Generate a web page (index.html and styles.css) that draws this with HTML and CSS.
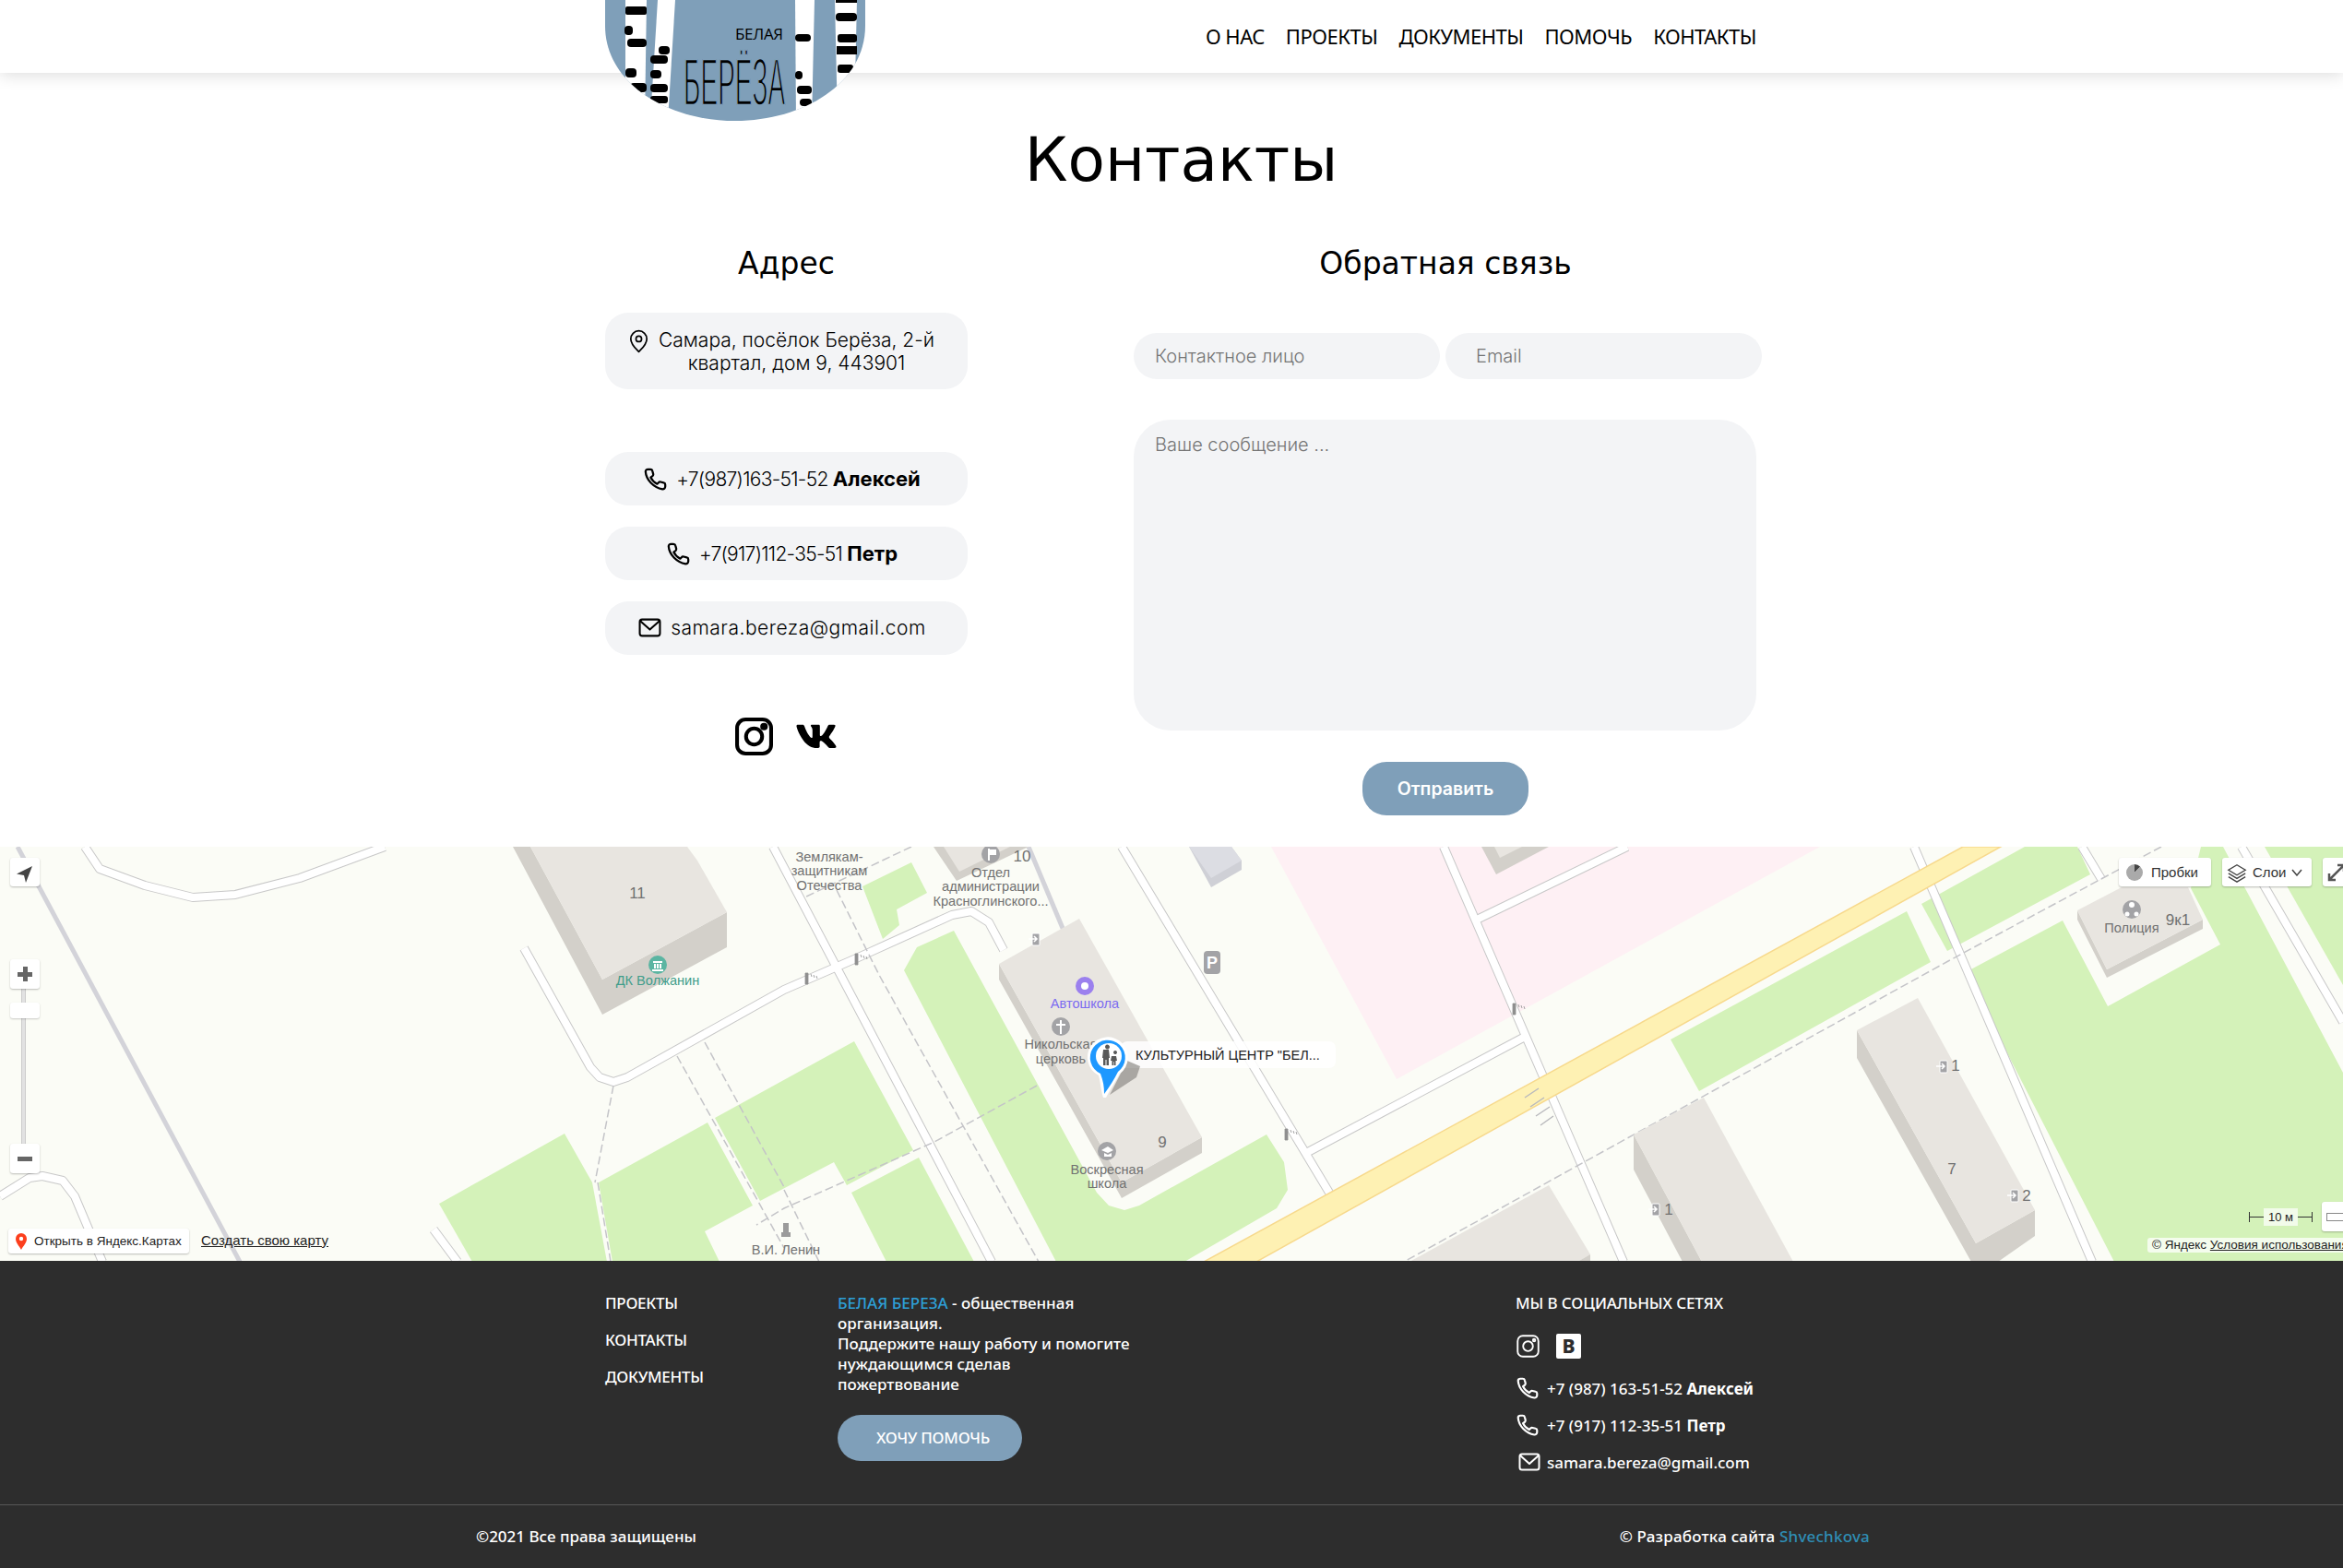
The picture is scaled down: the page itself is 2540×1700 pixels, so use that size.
FILE: index.html
```html
<!DOCTYPE html>
<html lang="ru">
<head>
  <meta charset="utf-8">
  <title>Контакты</title>
  <link rel="stylesheet" href="styles.css">
</head>
<body>

  <!-- shared icons -->
  <svg class="icon-defs" width="0" height="0">
    <symbol id="i-phone" viewBox="0 0 24 24"><path d="M2.500 4.600c0-1.200 1-2.100 2.200-2.100h2.500c.9 0 1.700.6 1.900 1.500l.8 3c.2.800-.1 1.500-.7 2L7.400 10.300c1.300 2.800 3.400 4.900 6.300 6.300l1.300-1.300c.5-.6 1.300-.8 2-.6l3 .8c.9.200 1.500 1 1.500 1.900v1.800c0 1.500-1.200 2.600-2.700 2.500C10.300 20 3 12.800 2.500 4.600z"/></symbol>
    <symbol id="i-mail" viewBox="0 0 24 24"><rect x="1.500" y="3.500" width="21" height="17" rx="2.500"/><path d="M2 5l10 9 10-9"/></symbol>
    <symbol id="i-place" viewBox="0 0 24 30"><path d="M12 28C8 24 2 19 2 12a10 10 0 0 1 20 0c0 7-6 12-10 16z"/><circle cx="12" cy="12" r="3.500"/></symbol>
    <symbol id="i-insta" viewBox="0 0 40 40"><rect x="2" y="2" width="36" height="36" rx="9"/><circle cx="20" cy="20" r="8.500"/><circle class="dot" cx="30.500" cy="9.500" r="2"/></symbol>
    <symbol id="i-vk" viewBox="0 0 576 512"><path d="M545 117.700c3.700-12.500 0-21.700-17.800-21.700h-58.900c-15 0-21.900 7.900-25.600 18.700 0 0-29.300 72.100-70.800 118.800-13.400 13.400-19.500 17.700-26.800 17.700-3.700 0-9.200-4.300-9.200-16.800V117.700c0-15-4.200-21.700-16.600-21.700h-92.600c-9.400 0-15 7-15 13.500 0 14.200 21.200 17.500 23.400 57.500v86.800c0 19-3.400 22.500-10.900 22.500-20 0-68.600-73.400-97.400-157.400-5.800-16.300-11.500-22.900-26.600-22.900H38.800c-16.800 0-20.200 7.900-20.200 16.700 0 15.600 20 93.100 93 195.500C160.300 375.600 229 413 291.400 413c37.400 0 42-8.400 42-22.900 0-66.800-3.400-73.100 15.400-73.100 8.700 0 23.700 4.400 58.700 38.100 40 40 46.600 58 69 58h58.900c16.800 0 25.300-8.400 20.400-25-11.200-34.900-86.900-106.700-90.300-111.500-8.700-11.200-6.200-16.200 0-26.200.1-.1 72-101.300 79.400-135.600z"/></symbol>
  </svg>

  <header class="site-header">
    <svg class="logo" viewBox="0 0 282 131" width="282" height="131">
      <defs><clipPath id="logo-clip"><path d="M0 0H282V28C282 90 215 131 141 131S0 90 0 28Z"/></clipPath></defs>
      <g clip-path="url(#logo-clip)">
        <rect class="logo-bg" width="282" height="131"/>
        <path class="logo-band" d="M22 0H45L43 131H22Z"/>
        <path class="logo-band" d="M57 0H76L68 131H49Z"/>
        <path class="logo-band" d="M206 0H227L224 131H207Z"/>
        <path class="logo-band" d="M249 0H273L270 131H252Z"/>
        <g class="logo-dash">
          <rect x="22" y="7" width="23" height="9" rx="2"/>
          <rect x="21" y="28" width="9" height="10" rx="4"/>
          <rect x="24" y="42" width="21" height="9" rx="4"/>
          <rect x="22" y="74" width="12" height="10" rx="4"/>
          <rect x="27" y="90" width="18" height="10" rx="4"/>
          <rect x="58" y="50" width="12" height="9" rx="4"/>
          <rect x="49" y="60" width="19" height="9" rx="4"/>
          <rect x="49" y="76" width="12" height="9" rx="4"/>
          <rect x="49" y="91" width="19" height="9" rx="4"/>
          <rect x="49" y="104" width="19" height="8" rx="3"/>
          <rect x="206" y="37" width="17" height="8" rx="4"/>
          <rect x="206" y="77" width="8" height="9" rx="4"/>
          <rect x="208" y="93" width="16" height="9" rx="4"/>
          <rect x="211" y="107" width="13" height="8" rx="4"/>
          <rect x="250" y="0" width="23" height="3"/>
          <rect x="250" y="14" width="23" height="9" rx="4"/>
          <rect x="252" y="37" width="21" height="9" rx="3"/>
          <rect x="251" y="50" width="22" height="9"/>
          <rect x="252" y="70" width="17" height="9" rx="3"/>
        </g>
        <text class="logo-small" x="141" y="43">БЕЛАЯ</text>
        <text class="logo-big" transform="translate(85 114) scale(.39 1)">БЕРЁЗА</text>
      </g>
    </svg>
    <nav class="main-nav">
      <a href="#">О НАС</a>
      <a href="#">ПРОЕКТЫ</a>
      <a href="#">ДОКУМЕНТЫ</a>
      <a href="#">ПОМОЧЬ</a>
      <a href="#">КОНТАКТЫ</a>
    </nav>
  </header>

  <main class="contacts">
    <h1>Контакты</h1>
    <div class="contacts-row">
      <section class="address-col">
        <h2>Адрес</h2>
        <div class="info-box address-box">
          <svg class="icon-line place-icon"><use href="#i-place"/></svg>
          <span>Самара, посёлок Берёза, 2-й<br>квартал, дом 9, 443901</span>
        </div>
        <div class="info-list">
          <a class="info-box phone-box" href="#"><svg class="icon-line phone-icon"><use href="#i-phone"/></svg>+7(987)163-51-52 <b>Алексей</b></a>
          <a class="info-box phone-box" href="#"><svg class="icon-line phone-icon"><use href="#i-phone"/></svg>+7(917)112-35-51 <b>Петр</b></a>
          <a class="info-box email-box" href="#"><svg class="icon-line mail-icon"><use href="#i-mail"/></svg>samara.bereza@gmail.com</a>
        </div>
        <div class="social">
          <svg class="icon-line insta-big"><use href="#i-insta"/></svg>
          <svg class="vk-big"><use href="#i-vk"/></svg>
        </div>
      </section>

      <section class="feedback-col">
        <h2>Обратная связь</h2>
        <form class="feedback-form">
          <div class="form-row">
            <input class="field name-field" type="text" placeholder="Контактное лицо">
            <input class="field email-field" type="text" placeholder="Email">
          </div>
          <textarea class="field message-field" placeholder="Ваше сообщение ..."></textarea>
          <button class="send-btn" type="button">Отправить</button>
        </form>
      </section>
    </div>
  </main>

  <section class="map">
    <svg class="map-canvas" viewBox="0 0 2540 450" width="2540" height="450">
      <defs>
        <path id="roads" d="M92 0L108 24L157 42L209 55L255 52L325 34L417 0
          M0 379L32 359L46 357L68 362L81 379L111 450
          M568 110L640 239L650 250L665 255L680 250L850 155L926 122L1032 74L1053 70L1072 82L1088 112
          M470 415L496 450
          M838 0L1075 450
          M1216 0L1441 375
          M1565 0L1760 450
          M1764 0L1603 78
          M1416 332L1655 205
          M2075 0L2268 450
          M2257 0L2278 35
          M2430 0L2540 190"/>
      </defs>

      <path class="m-pink" d="M1378 0L1514 252L1700 150L1973 0Z"/>

      <g class="m-green">
        <path d="M612 311L476 387L512 450H658L642 364Z"/>
        <path d="M767 299L649 364L664 450H780L764 417L816 389Z"/>
        <path d="M775 294L926 211L990 329L918 367L904 342L824 384Z"/>
        <path d="M996 337L923 375L961 450H1056Z"/>
        <path d="M1034 91L994 109L980 134L1145 450H1284L1384 392L1396 372L1392 342L1373 312L1235 389L1219 394L1202 389L1189 375Z"/>
        <path d="M2252 0L2266 30L2111 113L2083 62L2195 0Z"/>
        <path d="M2067 70L2093 125L1842 265L1811 209Z"/>
        <path d="M2131 136L2236 80L2285 173L2407 106L2375 45L2386 0H2410L2540 245V450H2292Z"/>
        <path d="M2455 0H2540V150Z"/>
        <path d="M935 43L988 17L1005 50L972 68L975 85L957 100Z"/>
      </g>

      <path class="m-rail" d="M19 0L260 450"/>
      <path class="m-rail" d="M1115 0L1159 105"/>

      <use class="m-road-edge" href="#roads"/>
      <use class="m-road" href="#roads"/>

      <path class="m-main" d="M1305 450L2128 0H2169L1362 450Z"/>

      <g class="m-dash">
        <path d="M907 47L953 139L1126 450"/>
        <path d="M1124 259L1013 320L850 392L820 410"/>
        <path d="M850 372L888 450"/>
        <path d="M665 259L645 364"/>
        <path d="M648 364L662 450"/>
        <path d="M734 227L850 435"/>
        <path d="M764 212L850 369"/>
        <path d="M988 0L872 55"/>
        <path d="M2343 0L2112 124L1708 347L1522 450"/>
      </g>

      <g class="m-cross">
        <path d="M1653 272L1668 262M1659 282L1674 272M1665 292L1680 282M1670 302L1684 292"/>
      </g>

      <!-- buildings -->
      <path class="m-wall" d="M556 0L653 182L788 109V71L653 144L575 0Z"/>
      <path class="m-roof" d="M575 0H745L756 15L788 71L653 144Z"/>
      <path class="m-wall" d="M1012 0L1037 37L1115 0Z"/>
      <path class="m-roof" d="M1023 0L1040 27L1095 0Z"/>
      <path class="m-wall-blue" d="M1289 0L1313 44L1346 25V15L1335 0Z"/>
      <path class="m-roof-blue" d="M1289 0L1313 34L1346 15L1335 0Z"/>
      <path class="m-wall" d="M1606 0L1622 30L1679 0Z"/>
      <path class="m-roof" d="M1620 0L1626 12L1650 0Z"/>
      <path class="m-wall" d="M1083 127V144L1216 381L1303 332V315L1216 364Z"/>
      <path class="m-roof" d="M1170 78L1303 315L1216 364L1083 127Z"/>
      <path class="m-wall" d="M2013 199V229L2137 450H2166L2206 422V394L2142 430Z"/>
      <path class="m-roof" d="M2079 164L2013 199L2142 430L2206 394Z"/>
      <path class="m-wall" d="M1771 312V350L1824 450H1845Z"/>
      <path class="m-roof" d="M1847 272L1771 312L1845 450H1944Z"/>
      <path class="m-roof" d="M1679 367L1528 450H1710L1724 442Z"/>
      <path class="m-wall" d="M1724 442V450H1710Z"/>
      <path class="m-wall" d="M2252 69V79L2284 142L2388 89V79L2284 133Z"/>
      <path class="m-roof" d="M2252 69L2300 44H2372L2388 79L2284 133Z"/>

      <!-- map icons -->
      <circle class="m-ico-teal" cx="713" cy="128" r="10"/>
      <path class="m-ico-white" d="M708 124H718V126H708ZM709 127H711V132H709ZM712 127H714V132H712ZM715 127H717V132H715ZM707 133H719V135H707Z"/>
      <circle class="m-ico-gray" cx="1074" cy="8" r="10"/>
      <path class="m-ico-white" d="M1071 2H1073V15H1071ZM1073 3H1080V9H1073Z"/>
      <circle class="m-ico-purple" cx="1176" cy="151" r="10"/>
      <circle class="m-ico-white" cx="1176" cy="151" r="4"/>
      <circle class="m-ico-gray" cx="1150" cy="195" r="10"/>
      <path class="m-ico-white" d="M1149 188H1151V203H1149ZM1145 192H1155V194H1145Z"/>
      <circle class="m-ico-gray" cx="1200" cy="330" r="10"/>
      <path class="m-ico-white" d="M1194 329L1201 325L1207 329L1201 332ZM1197 332L1201 334L1205 332V336H1197Z"/>
      <circle class="m-ico-gray" cx="2311" cy="68" r="10"/>
      <circle class="m-ico-white" cx="2311" cy="63" r="3"/>
      <circle class="m-ico-white" cx="2306" cy="73" r="2.500"/>
      <circle class="m-ico-white" cx="2316" cy="73" r="2.500"/>
      <rect class="m-ico-gray" x="1305" y="113" width="18" height="25" rx="4"/>
      <text class="m-park" x="1314" y="132">P</text>
      <path class="m-statue" d="M849 408H855V418H857V423H847V418H849Z"/>

      <g class="m-barrier">
        <path d="M873 137h3v12h-3zM879 138l1 3M882 139l1 3M885 140l1 3"/>
        <path d="M927 116h3v12h-3zM933 117l1 3M936 118l1 3M939 119l1 3"/>
        <path d="M1393 306h3v12h-3zM1399 307l1 3M1402 308l1 3M1405 309l1 3"/>
        <path d="M1640 170h3v12h-3zM1646 171l1 3M1649 172l1 3M1652 173l1 3"/>
      </g>

      <g class="m-door">
        <rect x="1119" y="94" width="8" height="13" rx="1"/>
        <rect x="2103" y="232" width="8" height="13" rx="1"/>
        <rect x="2180" y="372" width="8" height="13" rx="1"/>
        <rect x="1791" y="387" width="8" height="13" rx="1"/>
      </g>
      <path class="m-door-arrow" d="M1115 100H1124M1121 97L1124 100L1121 103M2099 238H2108M2105 235L2108 238L2105 241M2176 378H2185M2182 375L2185 378L2182 381M1787 393H1796M1793 390L1796 393L1793 396"/>

      <!-- map labels -->
      <g class="m-label">
        <text x="691" y="56" class="m-num">11</text>
        <text x="899" y="16">Землякам-</text>
        <text x="899" y="31">защитникам</text>
        <text x="899" y="47">Отечества</text>
        <text x="1108" y="16" class="m-num">10</text>
        <text x="1074" y="33">Отдел</text>
        <text x="1074" y="48">администрации</text>
        <text x="1074" y="64">Красноглинского...</text>
        <text x="1150" y="219">Никольская</text>
        <text x="1150" y="235">церковь</text>
        <text x="1260" y="326" class="m-num">9</text>
        <text x="1200" y="355">Воскресная</text>
        <text x="1200" y="370">школа</text>
        <text x="852" y="442">В.И. Ленин</text>
        <text x="2311" y="93">Полиция</text>
        <text x="2361" y="85" class="m-num">9к1</text>
        <text x="2120" y="243" class="m-num">1</text>
        <text x="2116" y="355" class="m-num">7</text>
        <text x="2197" y="384" class="m-num">2</text>
        <text x="1809" y="399" class="m-num">1</text>
        <text x="713" y="150" class="m-teal">ДК Волжанин</text>
        <text x="1176" y="175" class="m-purple">Автошкола</text>
      </g>

      <!-- placemark -->
      <rect class="m-pin-label" x="1215" y="211" width="233" height="29" rx="7"/>
      <text class="m-pin-text" x="1231" y="231">КУЛЬТУРНЫЙ ЦЕНТР "БЕЛ...</text>
      <path class="m-pin-shadow" d="M1203 269L1222 232L1236 238L1232 250Z"/>
      <path class="m-pin-halo" d="M1196 272C1193 262 1193 255 1191 248A22 22 0 1 1 1214 246C1209 255 1203 264 1199 272Z"/>
      <path class="m-pin-blue" d="M1197 268C1197 260 1196 254 1193 246A19 19 0 1 1 1212 244C1208 252 1203 260 1197 268Z"/>
      <circle class="m-ico-white" cx="1202" cy="227" r="14"/>
      <path class="m-pin-people" d="M1198 217a2.500 2.500 0 1 1 0 .1ZM1196 220H1202L1203 229H1202V237H1199.500V231H1198.500V237H1196V229H1195ZM1207 223a2 2 0 1 1 0 .1ZM1205 227H1210L1211 232H1209.500V237H1207.800V233H1207.200V237H1205.500V232H1204Z"/>
    </svg>

    <button class="map-btn map-locate" type="button"><svg viewBox="0 0 20 20" width="20" height="20"><path d="M18 1L1 9.500L9 11L11 19Z"/></svg></button>
    <div class="map-zoom">
      <button class="map-btn map-zoom-btn" type="button"><span class="zoom-plus"></span></button>
      <div class="map-zoom-track"><span class="map-zoom-handle"></span></div>
      <button class="map-btn map-zoom-btn" type="button"><span class="zoom-minus"></span></button>
    </div>
    <a class="map-open" href="#">
      <svg viewBox="0 0 14 20" width="14" height="20"><path class="open-pin" d="M7 19C5 15 1 11.500 1 7a6 6 0 0 1 12 0c0 4.500-4 8-6 12z"/><circle cx="7" cy="7" r="2.200" fill="#fff"/></svg>Открыть в Яндекс.Картах
    </a>
    <a class="map-create" href="#">Создать свою карту</a>

    <div class="map-top-right">
      <button class="map-btn map-tool map-traffic" type="button"><span class="traffic-dot"></span>Пробки</button>
      <button class="map-btn map-tool map-layers" type="button">
        <svg viewBox="0 0 24 24" width="22" height="22"><path d="M12 3L22 9L12 15L2 9ZM2 13L12 19L22 13M2 17L12 23L22 17"/></svg>Слои
        <svg class="chev" viewBox="0 0 12 8" width="12" height="8"><path d="M1 1L6 7L11 1"/></svg>
      </button>
      <button class="map-btn map-full" type="button"><svg viewBox="0 0 20 20" width="20" height="20"><path d="M2 18L18 2M11 2H18V9M2 11V18H9"/></svg></button>
    </div>

    <div class="map-scale-row">
      <span class="scale-line"></span><span class="scale-text">10 м</span><span class="scale-line"></span>
      <button class="map-btn map-ruler" type="button"><span></span></button>
    </div>
    <div class="map-copy">© Яндекс <a href="#">Условия использования</a></div>
  </section>

  <footer class="site-footer">
    <div class="footer-top">
      <nav class="footer-nav">
        <a href="#">ПРОЕКТЫ</a>
        <a href="#">КОНТАКТЫ</a>
        <a href="#">ДОКУМЕНТЫ</a>
      </nav>
      <div class="footer-about">
        <p><span class="accent">БЕЛАЯ БЕРЕЗА</span> - общественная<br>организация.<br>Поддержите нашу работу и помогите<br>нуждающимся сделав<br>пожертвование</p>
        <a class="help-btn" href="#">ХОЧУ ПОМОЧЬ</a>
      </div>
      <div class="footer-social">
        <div class="footer-heading">МЫ В СОЦИАЛЬНЫХ СЕТЯХ</div>
        <div class="footer-icons">
          <svg class="icon-line footer-insta"><use href="#i-insta"/></svg>
          <span class="footer-vk">В</span>
        </div>
        <a class="footer-contact" href="#"><svg class="icon-line footer-phone"><use href="#i-phone"/></svg>+7 (987) 163-51-52 <b>Алексей</b></a>
        <a class="footer-contact" href="#"><svg class="icon-line footer-phone"><use href="#i-phone"/></svg>+7 (917) 112-35-51 <b>Петр</b></a>
        <a class="footer-contact" href="#"><svg class="icon-line footer-mail"><use href="#i-mail"/></svg>samara.bereza@gmail.com</a>
      </div>
    </div>
    <div class="footer-bottom">
      <span>©2021 Все права защищены</span>
      <span class="footer-dev">© Разработка сайта <a class="accent-dark" href="#">Shvechkova</a></span>
    </div>
  </footer>

</body>
</html>
```
FILE: styles.css
```css
body {
  margin: 0;
  font-family: "Noto Sans", sans-serif;
  color: #000;
  background-color: #fff;
}

a {
  color: inherit;
  text-decoration: none;
}

.icon-defs {
  position: absolute;
}

.icon-line {
  fill: none;
  stroke: currentColor;
  stroke-width: 2;
  stroke-linejoin: round;
  stroke-linecap: round;
}

/* Header */
.site-header {
  position: relative;
  z-index: 2;
  height: 79px;
  box-sizing: border-box;
  padding: 0 636px 2px 0;
  background-color: #fff;
  box-shadow: 0 3px 16px rgba(0, 0, 0, 0.13);
  display: flex;
  justify-content: flex-end;
  align-items: center;
}

.logo {
  position: absolute;
  left: 656px;
  top: 0;
}

.logo-bg {
  fill: #7f9fb9;
}

.logo-band {
  fill: #fff;
}

.logo-dash {
  fill: #000;
}

.logo-small {
  font-family: "Open Sans", sans-serif;
  font-size: 17px;
  letter-spacing: -0.3px;
}

.logo-big {
  font-family: "Liberation Sans", sans-serif;
  font-size: 72px;
  stroke: #7f9fb9;
  stroke-width: 2.400px;
}

.main-nav {
  display: flex;
  gap: 23px;
  font-size: 22px;
  letter-spacing: -0.5px;
}

/* Contacts */
.contacts {
  height: 839px;
  box-sizing: border-box;
  margin-left: 656px;
  width: 1249px;
  font-family: Inter, sans-serif;
}

.contacts h1 {
  margin: 0;
  padding-top: 55px;
  height: 117px;
  box-sizing: border-box;
  font-family: "DejaVu Sans", sans-serif;
  font-size: 66px;
  line-height: 80px;
  font-weight: 400;
  text-align: center;
}

.contacts h2 {
  margin: 0;
  font-family: "DejaVu Sans", sans-serif;
  font-size: 33px;
  line-height: 44px;
  font-weight: 400;
  text-align: center;
}

.contacts-row {
  display: flex;
  gap: 180px;
  padding-top: 68px;
}

.address-col {
  width: 393px;
}

.info-box {
  display: block;
  height: 58px;
  line-height: 58px;
  background-color: #f3f4f6;
  border-radius: 25px;
  text-align: center;
  font-size: 21px;
  font-weight: 300;
  white-space: nowrap;
}

.address-box {
  display: flex;
  justify-content: center;
  align-items: flex-start;
  gap: 11px;
  height: 83px;
  margin-top: 31px;
  padding: 17px 10px 0 0;
  box-sizing: border-box;
  line-height: 25px;
}

.info-list {
  display: flex;
  flex-direction: column;
  gap: 23px;
  margin-top: 68px;
}

.info-list svg {
  vertical-align: middle;
  margin-top: -4px;
}

.phone-box {
  letter-spacing: -0.7px;
  padding-right: 10px;
}

.phone-box b {
  font-size: 22px;
  font-weight: 700;
  letter-spacing: 0;
}

.email-box {
  letter-spacing: 0.5px;
  padding-right: 9px;
}

.place-icon {
  flex: none;
  width: 21px;
  height: 26px;
  margin-top: 1px;
}

.phone-icon {
  width: 27px;
  height: 27px;
  margin-right: 9px;
}

.mail-icon {
  width: 25px;
  height: 25px;
  margin-right: 10px;
}

.social {
  display: flex;
  justify-content: center;
  align-items: center;
  gap: 24px;
  margin-top: 68px;
}

.insta-big {
  width: 41px;
  height: 41px;
  stroke-width: 4;
}

.insta-big .dot,
.footer-insta .dot {
  fill: currentColor;
}

.vk-big {
  width: 46px;
  height: 41px;
}

.feedback-col {
  width: 676px;
}

.feedback-form {
  display: flex;
  flex-direction: column;
  align-items: flex-start;
  padding-top: 53px;
}

.form-row {
  display: flex;
  gap: 6px;
}

.field {
  box-sizing: border-box;
  border: none;
  background-color: #f3f4f6;
  font-family: Inter, sans-serif;
  font-size: 20px;
  font-weight: 300;
  outline: none;
}

.field::placeholder {
  color: #757575;
  opacity: 1;
}

.name-field,
.email-field {
  height: 50px;
  border-radius: 25px;
}

.name-field {
  width: 332px;
  padding-left: 23px;
}

.email-field {
  width: 343px;
  padding-left: 33px;
}

.message-field {
  display: block;
  width: 675px;
  height: 337px;
  margin-top: 44px;
  padding: 15px 23px;
  border-radius: 40px;
  resize: none;
}

.send-btn {
  align-self: center;
  width: 180px;
  height: 58px;
  margin-top: 34px;
  border: none;
  border-radius: 26px;
  background-color: #7f9fb9;
  color: #fff;
  font-family: Inter, sans-serif;
  font-size: 19.500px;
  font-weight: 600;
}

/* Map */
.map {
  position: relative;
  height: 449px;
  overflow: hidden;
  background-color: #fbfcf6;
  font-family: "Liberation Sans", sans-serif;
}

.map-canvas {
  display: block;
}

.m-pink { fill: #fef0f4; }
.m-green { fill: #d4f2b9; }
.m-rail { fill: none; stroke: #d3d3d9; stroke-width: 5; }
.m-road-edge { fill: none; stroke: #c8c8c8; stroke-width: 10; stroke-linejoin: round; }
.m-road { fill: none; stroke: #fff; stroke-width: 8; stroke-linejoin: round; }
.m-main { fill: #fef1b3; stroke: #f7d98c; stroke-width: 1.500; }
.m-dash { fill: none; stroke: #c4c4c8; stroke-width: 1.500; stroke-dasharray: 9 4; }
.m-cross { fill: none; stroke: #b9b9bd; stroke-width: 1.500; }
.m-wall { fill: #d3d0ca; }
.m-roof { fill: #e8e5e0; }
.m-wall-blue { fill: #cfd0d6; }
.m-roof-blue { fill: #dcdde3; }
.m-ico-teal { fill: #5bb5a2; }
.m-ico-gray { fill: #a3a3a6; }
.m-ico-purple { fill: #9b80ee; }
.m-ico-white { fill: #fff; }
.m-statue { fill: #9b9b9b; }
.m-park { fill: #fff; font-size: 18px; font-weight: 700; text-anchor: middle; }
.m-barrier { fill: #8f8f8f; stroke: #8f8f8f; stroke-width: 0.800; }
.m-door { fill: #a3a3a6; stroke: #fff; stroke-width: 1; }
.m-door-arrow { fill: none; stroke: #fff; stroke-width: 1.500; }

.m-label {
  fill: #717171;
  font-size: 14.600px;
  text-anchor: middle;
}

.m-num { font-size: 17px; }
.m-teal { fill: #3f9d8a; }
.m-purple { fill: #7c6cf0; }

.m-pin-label { fill: #fff; opacity: 0.85; }
.m-pin-text { fill: #222; font-size: 14.500px; }
.m-pin-shadow { fill: #8e8c88; opacity: 0.7; }
.m-pin-halo { fill: #fff; }
.m-pin-blue { fill: #1e98ff; }
.m-pin-people { fill: #595959; }

.map-btn {
  display: block;
  box-sizing: border-box;
  margin: 0;
  padding: 0;
  border: none;
  border-radius: 3px;
  background-color: #fff;
  box-shadow: 0 1px 2px rgba(0, 0, 0, 0.25);
  color: #000;
  font-family: "Liberation Sans", sans-serif;
}

.map-locate {
  position: absolute;
  left: 11px;
  top: 12px;
  width: 32px;
  height: 31px;
}

.map-locate svg {
  fill: #444;
  display: block;
  margin: 5px 0 0 6px;
}

.map-zoom {
  position: absolute;
  left: 11px;
  top: 122px;
  width: 32px;
}

.map-zoom-btn {
  position: relative;
  z-index: 1;
  width: 32px;
  height: 32px;
}

.zoom-plus,
.zoom-minus {
  display: block;
  width: 16px;
  height: 5px;
  margin: auto;
  background-color: #666;
}

.zoom-plus {
  position: relative;
}

.zoom-plus::after {
  content: "";
  position: absolute;
  left: 5.500px;
  top: -5.500px;
  width: 5px;
  height: 16px;
  background-color: #666;
}

.map-zoom-track {
  position: relative;
  width: 5px;
  height: 168px;
  margin-left: 12px;
  background-color: #e2e2e2;
  border: solid #ccc;
  border-width: 0 1px;
  box-sizing: border-box;
}

.map-zoom-handle {
  position: absolute;
  left: -13px;
  top: 15px;
  width: 32px;
  height: 17px;
  background-color: #fff;
  border-radius: 3px;
  box-shadow: 0 1px 2px rgba(0, 0, 0, 0.2);
}

.map-open {
  position: absolute;
  left: 9px;
  top: 414px;
  width: 196px;
  height: 27px;
  display: flex;
  align-items: center;
  gap: 7px;
  padding-left: 7px;
  box-sizing: border-box;
  background-color: #fff;
  border-radius: 3px;
  box-shadow: 0 1px 2px rgba(0, 0, 0, 0.25);
  font-size: 13.500px;
  color: #222;
}

.open-pin {
  fill: #fc3f1d;
}

.map-create {
  position: absolute;
  left: 218px;
  top: 418px;
  font-size: 15px;
  color: #222;
  text-decoration: underline;
}

.map-top-right {
  position: absolute;
  left: 2297px;
  top: 12px;
  display: flex;
  gap: 12px;
}

.map-tool {
  height: 31px;
  display: flex;
  align-items: center;
  font-size: 15px;
  color: #333;
}

.map-traffic {
  width: 100px;
  gap: 9px;
  padding-left: 8px;
}

.traffic-dot {
  width: 18px;
  height: 18px;
  border-radius: 50%;
  background: conic-gradient(#444 0 12%, #aaa 12% 100%);
}

.map-layers {
  width: 97px;
  gap: 6px;
  padding-left: 5px;
}

.map-layers svg {
  fill: none;
  stroke: #444;
  stroke-width: 1.500;
}

.map-full {
  width: 40px;
  height: 31px;
}

.map-full svg {
  display: block;
  margin-left: 5px;
  fill: none;
  stroke: #555;
  stroke-width: 2.500;
}

.map-scale-row {
  position: absolute;
  left: 2438px;
  top: 385px;
  height: 32px;
  display: flex;
  align-items: center;
}

.scale-line {
  width: 15px;
  height: 11px;
  border-left: 1px solid #333;
  background: linear-gradient(#333, #333) center / 100% 1px no-repeat;
}

.scale-line:nth-child(3) {
  border-left: none;
  border-right: 1px solid #333;
}

.scale-text {
  padding: 2px 5px;
  background-color: rgba(255, 255, 255, 0.7);
  font-size: 13px;
  color: #222;
  white-space: nowrap;
}

.map-ruler {
  width: 32px;
  height: 32px;
  margin-left: 10px;
}

.map-ruler span {
  display: block;
  width: 22px;
  height: 9px;
  margin-left: 5px;
  border: 1px solid #888;
  box-sizing: border-box;
}

.map-copy {
  position: absolute;
  left: 2328px;
  top: 424px;
  height: 16px;
  line-height: 16px;
  padding-left: 5px;
  width: 220px;
  background-color: rgba(255, 255, 255, 0.75);
  font-size: 13.500px;
  color: #222;
  white-space: nowrap;
  border-radius: 3px 0 0 3px;
}

.map-copy a {
  text-decoration: underline;
}

/* Footer */
.site-footer {
  height: 333px;
  box-sizing: border-box;
  background-color: #2d2d2d;
  color: #fff;
  font-size: 17px;
  font-weight: 500;
}

.footer-top {
  height: 265px;
  box-sizing: border-box;
  padding: 35px 0 0 656px;
  display: flex;
  border-bottom: 1px solid #585858;
}

.footer-nav {
  width: 252px;
  display: flex;
  flex-direction: column;
  gap: 18px;
  line-height: 22px;
  letter-spacing: -0.3px;
}

.footer-about {
  width: 735px;
}

.footer-about p {
  margin: 0;
  line-height: 22px;
}

.accent {
  color: #2e9fd6;
}

.accent-dark {
  color: #2f8db5;
}

.help-btn {
  display: block;
  box-sizing: border-box;
  width: 200px;
  height: 50px;
  margin-top: 22px;
  padding-left: 42px;
  line-height: 50px;
  border-radius: 25px;
  background-color: #7f9fb9;
  letter-spacing: -0.3px;
}

.footer-heading {
  line-height: 22px;
  letter-spacing: -0.1px;
}

.footer-icons {
  display: flex;
  align-items: center;
  gap: 18px;
  margin-top: 22px;
  height: 27px;
}

.footer-insta {
  width: 25px;
  height: 25px;
  margin-left: 1px;
  stroke-width: 3;
}

.footer-vk {
  width: 27px;
  height: 27px;
  border-radius: 2px;
  background-color: #fff;
  color: #2d2d2d;
  text-align: center;
  line-height: 27px;
  font-size: 21px;
  font-weight: 800;
}

.footer-contact {
  display: flex;
  align-items: center;
  height: 40px;
  white-space: pre;
}

.footer-icons + .footer-contact {
  margin-top: 12px;
}

.footer-contact b {
  font-weight: 700;
}

.footer-phone {
  width: 26px;
  height: 26px;
  margin: 0 8px 0 0;
}

.footer-mail {
  width: 24px;
  height: 24px;
  margin: 0 7px 0 3px;
}

.footer-bottom {
  display: flex;
  justify-content: space-between;
  padding: 23px 513px 0 516px;
  line-height: 22px;
}

.footer-dev {
  letter-spacing: 0.2px;
}
```
